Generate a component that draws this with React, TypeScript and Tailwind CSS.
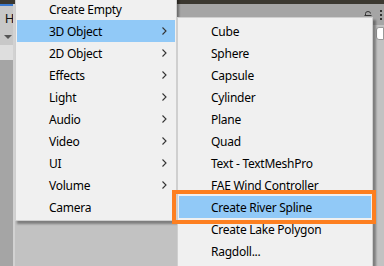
import { ReactNode } from 'react';

const mainItems = [
  { label: 'Create Empty', sub: false },
  { label: '3D Object', sub: true, active: true },
  { label: '2D Object', sub: true },
  { label: 'Effects', sub: true },
  { label: 'Light', sub: true },
  { label: 'Audio', sub: true },
  { label: 'Video', sub: true },
  { label: 'UI', sub: true },
  { label: 'Volume', sub: true },
  { label: 'Camera', sub: false },
];

const subItems = [
  'Cube',
  'Sphere',
  'Capsule',
  'Cylinder',
  'Plane',
  'Quad',
  'Text - TextMeshPro',
  'FAE Wind Controller',
  'Create River Spline',
  'Create Lake Polygon',
  'Ragdoll...',
];

function Chevron() {
  return (
    <svg width="5" height="8" viewBox="0 0 5 8" className="text-[#333]">
      <polyline points="0.5,0.5 4,4 0.5,7.5" fill="none" stroke="currentColor" strokeWidth="1.1" />
    </svg>
  );
}

function MenuItem({ label, active, children }: { label: string; active?: boolean; children?: ReactNode }) {
  return (
    <div className={`flex h-[22px] items-center pl-[32px] pr-[8px] ${active ? 'bg-[#91c9f7]' : ''}`}>
      <span className="flex-1 whitespace-nowrap tracking-[-0.25px] pt-[1px]">{label}</span>
      {children}
    </div>
  );
}

export default function App() {
  return (
    <div
      className="relative w-[384px] h-[266px] overflow-hidden bg-[#c2c2c2] text-[12px] text-black"
      style={{ fontFamily: '"Segoe UI", "Noto Sans", "Liberation Sans", sans-serif' }}
    >
      {/* editor backdrop */}
      <div className="h-[4px] bg-[#3b3830]" />
      <div className="flex h-full">
        <div className="w-[13px] flex flex-col bg-[#a5a5a5]">
          <div className="h-[2px] bg-[#3a79d0]" />
          <div className="h-[39px] bg-[#c8c8c8] flex flex-col items-center pt-[4px]">
            <span className="text-[13px] leading-[16px] text-[#111] pl-[6px]">H</span>
            <svg width="8" height="5" viewBox="0 0 8 5" className="mt-[9px] ml-[3px]">
              <polygon points="0,0 8,0 4,4" fill="#555" />
            </svg>
          </div>
          <div className="h-[15px] bg-[#dedede]" />
        </div>
        <div className="w-[2px] bg-[#d2d2d2]" />
        <div className="flex-1 flex flex-col">
          <div className="h-[21px] bg-[#a5a5a5] flex justify-end items-center gap-[8px] pr-[2px]">
            <svg width="8" height="8" viewBox="0 0 8 8">
              <path d="M1.5 4 V2.5 A2.5 2 0 0 1 6.5 2.5 M0.5 4.5 H7.5 M0.5 7.5 H7.5" fill="none" stroke="#333" strokeWidth="1" />
            </svg>
            <div className="flex flex-col gap-[2px]">
              <div className="w-[2px] h-[2px] bg-[#333]" />
              <div className="w-[2px] h-[2px] bg-[#333]" />
              <div className="w-[2px] h-[2px] bg-[#333]" />
            </div>
          </div>
          <div className="flex justify-end pt-[2px]">
            <div className="w-[8px] h-[13px] bg-white border border-[#999] rounded-l-[3px]" />
          </div>
        </div>
      </div>

      {/* main context menu */}
      <div className="absolute left-[15px] top-[-5px] w-[162px] bg-[#f0f0f0] border border-[#cfcfcf] py-[2px] px-[1px] shadow-[2px_3px_2px_rgba(0,0,0,0.35)]">
        {mainItems.map((it) => (
          <MenuItem key={it.label} label={it.label} active={it.active}>
            {it.sub ? <Chevron /> : null}
          </MenuItem>
        ))}
      </div>

      {/* 3D Object submenu */}
      <div className="absolute left-[177px] top-[17px] w-[196px] bg-[#f0f0f0] border border-[#cfcfcf] pt-[2px] pb-[12px] px-[1px] shadow-[3px_3px_2px_rgba(0,0,0,0.35)]">
        {subItems.map((label) => (
          <MenuItem key={label} label={label} active={label === 'Create River Spline'} />
        ))}
      </div>

      {/* highlight box */}
      <div className="absolute left-[172px] top-[190px] w-[204px] h-[34px] border-[4px] border-[#fd7f20]" />
    </div>
  );
}
